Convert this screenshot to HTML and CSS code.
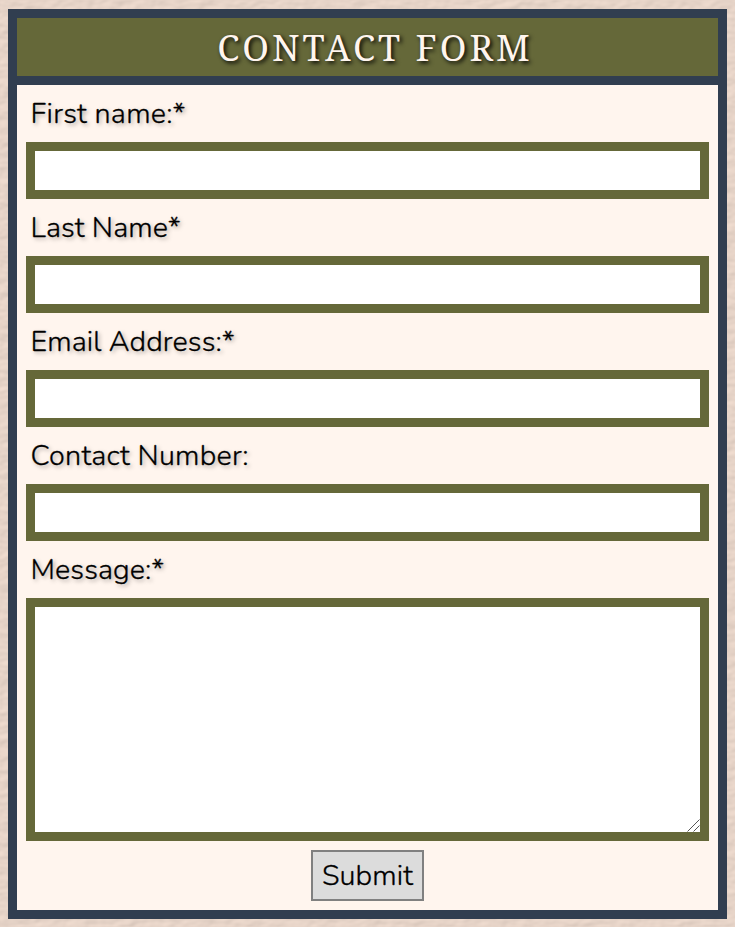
FILE: index.html
```html
<!DOCTYPE html>
<html lang="en">
<head>
<meta charset="utf-8">
<title>Contact Form</title>
<link rel="stylesheet" href="styles.css">
</head>
<body>
<svg class="paper" aria-hidden="true">
  <filter id="grain" x="0" y="0" width="100%" height="100%" color-interpolation-filters="sRGB">
    <feTurbulence type="fractalNoise" baseFrequency="0.07 0.11" numOctaves="2" seed="8" result="noise"/>
    <feDiffuseLighting in="noise" surfaceScale="0.55" lighting-color="#f8e4d7">
      <feDistantLight azimuth="235" elevation="68"/>
    </feDiffuseLighting>
  </filter>
  <rect width="100%" height="100%" filter="url(#grain)"/>
</svg>
<form class="card">
  <h1 class="title">CONTACT FORM</h1>
  <div class="fields">
    <label class="label loose" for="first">First name:*</label>
    <input class="field" id="first" type="text">
    <label class="label" for="last">Last Name*</label>
    <input class="field" id="last" type="text">
    <label class="label" for="email">Email Address:*</label>
    <input class="field" id="email" type="text">
    <label class="label loose" for="phone">Contact Number:</label>
    <input class="field" id="phone" type="text">
    <label class="label" for="message">Message:*</label>
    <div class="message-box">
      <textarea class="field message" id="message"></textarea>
      <svg class="grip" viewBox="0 0 13 13" aria-hidden="true">
        <path d="M0.5 12.5L12.5 0.5M6.5 12.5L12.5 6.5"/>
      </svg>
    </div>
    <button class="submit" type="button">Submit</button>
  </div>
</form>
</body>
</html>
```
FILE: styles.css
```css
* { box-sizing: border-box; }

body {
  margin: 0;
  padding: 9px 8px 8px;
  background: #e8d6c8;
  font-family: Nunito, Lato, sans-serif;
  font-size: 28.8px;
  font-weight: 300;
  color: #000;
}

.paper {
  position: fixed;
  inset: 0;
  z-index: -1;
  width: 100%;
  height: 100%;
}

.card {
  height: 910px;
  border: 9px solid #313e50;
  background: #fff5ee;
}

.title {
  height: 67px;
  margin: 0;
  padding-left: 15px;
  border-bottom: 9px solid #313e50;
  background: #656839;
  color: #fff5ee;
  font: 400 36px/59px "Noto Serif", "Droid Serif", "DejaVu Serif Condensed", "DejaVu Serif", serif;
  letter-spacing: 3px;
  text-align: center;
  text-shadow: 2px 2px 4px #000;
}

.fields {
  display: flex;
  flex-direction: column;
  padding: 0 9px;
}

.label {
  height: 57px;
  padding-left: 4.5px;
  line-height: 57px;
  letter-spacing: 0.08px;
  white-space: nowrap;
  text-shadow: 2px 2px 4px rgba(0, 0, 0, 0.35);
  -webkit-text-stroke: 0.3px #000;
}

.loose { letter-spacing: 0.25px; }

.field {
  display: block;
  width: 100%;
  height: 57px;
  margin: 0;
  padding: 0 4px;
  border: 9px solid #656839;
  border-radius: 0;
  outline: 0;
  background: #fff;
  font: inherit;
}

.message-box { position: relative; }

.message {
  height: 243px;
  resize: none;
}

.grip {
  position: absolute;
  right: 9px;
  bottom: 9px;
  width: 13px;
  height: 13px;
  fill: none;
  stroke: #555;
  stroke-width: 1;
}

.submit {
  align-self: center;
  width: 113px;
  height: 51px;
  margin-top: 9px;
  padding: 0;
  border: 2px solid #808080;
  border-radius: 0;
  background: #dcdcdc;
  color: #000;
  font: inherit;
  letter-spacing: 0.1px;
  -webkit-text-stroke: 0.3px #000;
}
```
